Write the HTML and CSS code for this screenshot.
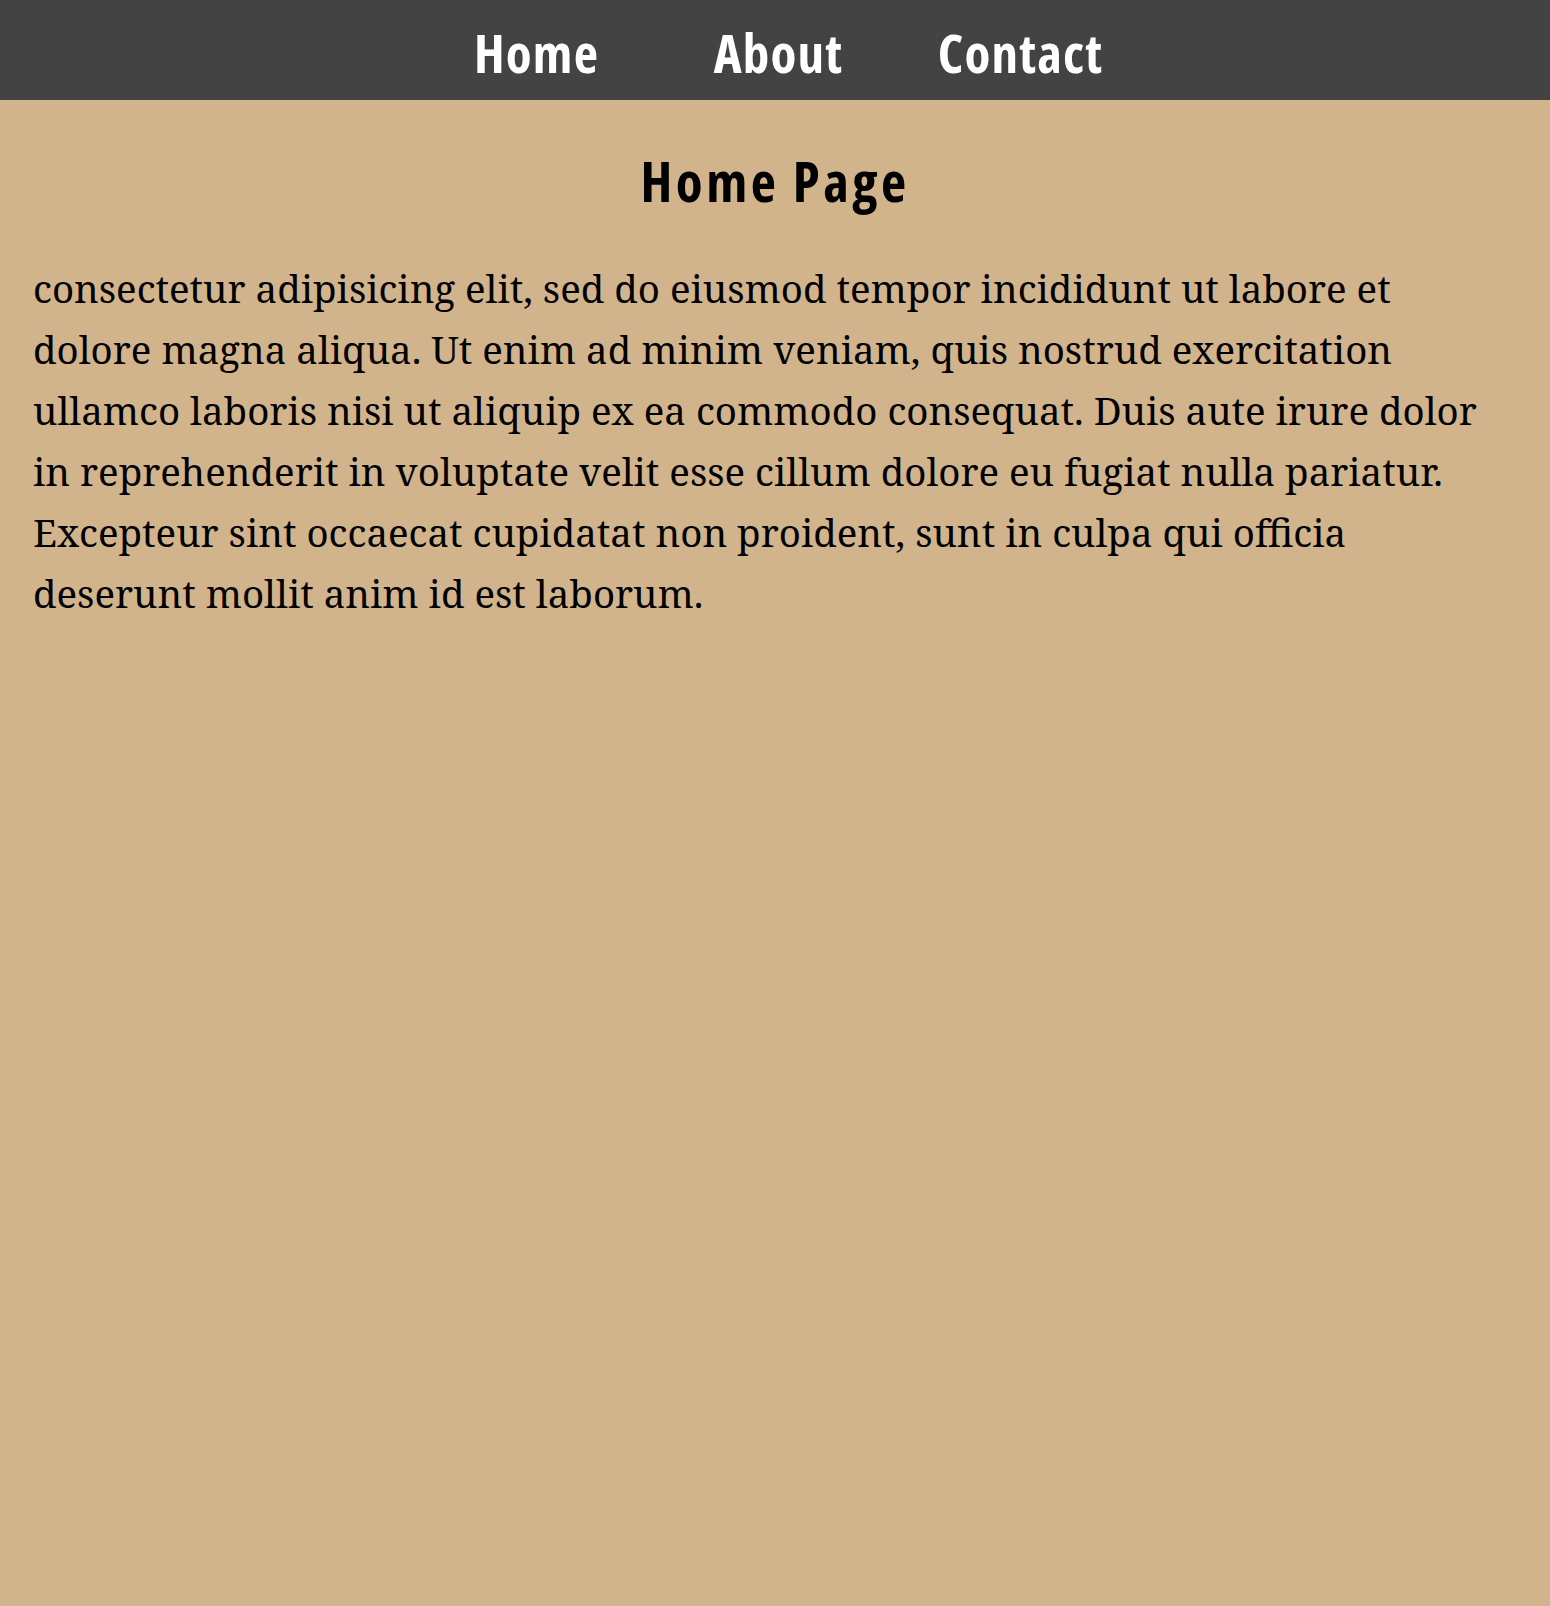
FILE: index.html
```html
<!DOCTYPE html>
<html lang="en">
<head>
<meta charset="utf-8">
<title>Home Page</title>
<link rel="stylesheet" href="styles.css">
</head>
<body>
<nav class="topnav">
  <a class="nav-link nav-home" href="#">Home</a>
  <a class="nav-link nav-about" href="#">About</a>
  <a class="nav-link nav-contact" href="#">Contact</a>
</nav>
<main class="content">
  <h1 class="page-title">Home Page</h1>
  <p class="body-text">consectetur adipisicing elit, sed do eiusmod tempor incididunt ut labore et dolore magna aliqua. Ut enim ad minim veniam, quis nostrud exercitation ullamco laboris nisi ut aliquip ex ea commodo consequat. Duis aute irure dolor in reprehenderit in voluptate velit esse cillum dolore eu fugiat nulla pariatur. Excepteur sint occaecat cupidatat non proident, sunt in culpa qui officia deserunt mollit anim id est laborum.</p>
</main>
</body>
</html>
```

FILE: styles.css
```css
html, body {
  margin: 0;
  padding: 0;
}
body {
  background: #d2b48c;
  min-height: 100vh;
  font-family: "Noto Serif", "DejaVu Serif", serif;
}
.topnav {
  box-sizing: border-box;
  height: 100px;
  background: #434343;
  display: flex;
  justify-content: center;
  align-items: center;
  padding: 5px 0 0 7px;
}
.nav-link {
  width: 242px;
  text-align: center;
  color: #ffffff;
  text-decoration: none;
  font-family: "Open Sans", "DejaVu Sans Condensed", sans-serif;
  font-stretch: 75%;
  font-weight: 700;
  font-size: 53px;
  letter-spacing: 1.2px;
}
.content {
  padding: 0 33px;
}
.page-title {
  margin: 43px 0 40px;
  text-align: center;
  font-family: "Open Sans", "DejaVu Sans Condensed", sans-serif;
  font-stretch: 75%;
  font-weight: 700;
  font-size: 55px;
  line-height: 75px;
  letter-spacing: 3.5px;
  color: #000;
}
.body-text {
  margin: 0 17px 0 0;
  font-size: 38.4px;
  line-height: 61px;
  color: #000;
}
```
